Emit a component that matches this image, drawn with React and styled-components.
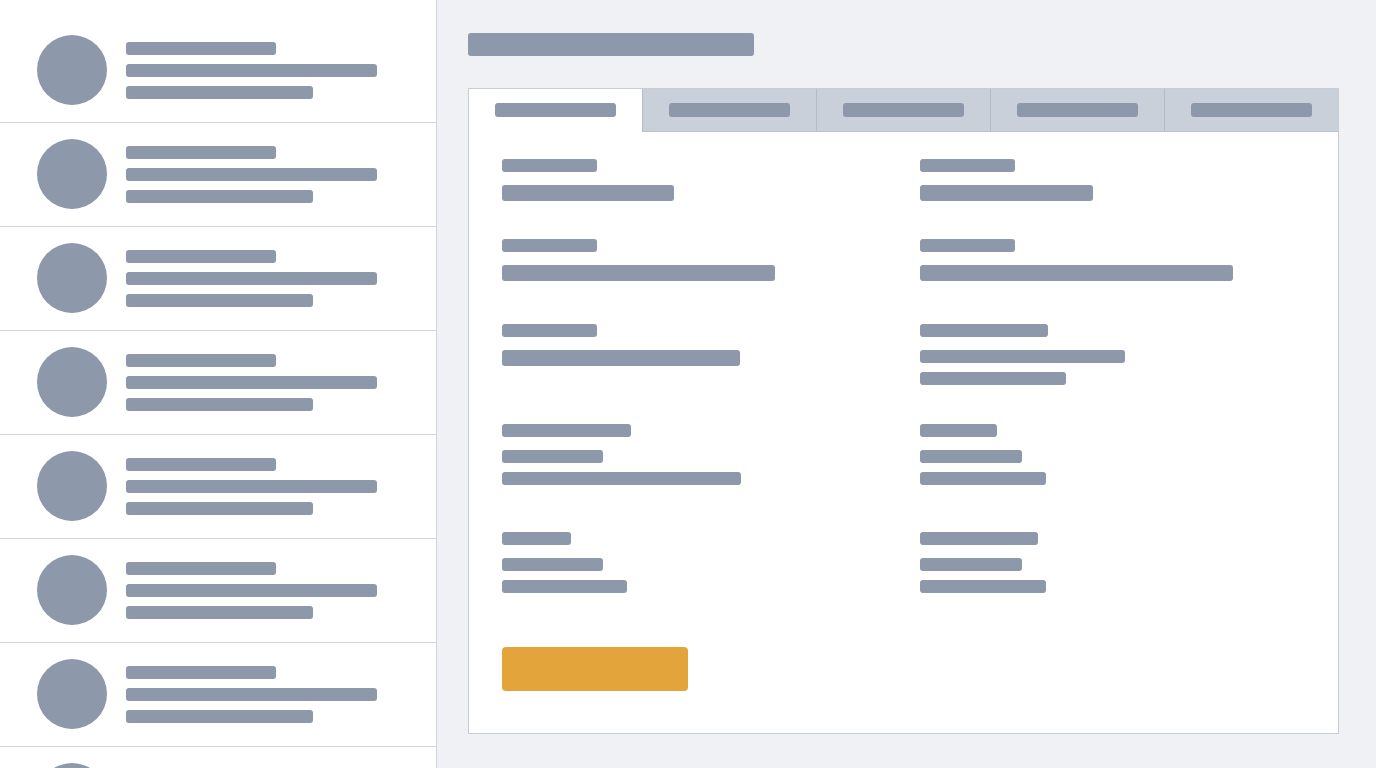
import React from "react";
import styled, { createGlobalStyle } from "styled-components";

const GlobalStyle = createGlobalStyle`
  html, body {
    margin: 0;
    padding: 0;
    height: 100%;
    background: #f0f1f4;
    font-family: "Liberation Sans", Arial, sans-serif;
  }
  #root { height: 100%; }
  * { box-sizing: border-box; }
`;

const BONE = "#8d98aa";

const Layout = styled.div`
  display: flex;
  height: 768px;
  overflow: hidden;
`;

const Sidebar = styled.aside`
  flex: 0 0 437px;
  height: 100%;
  overflow: hidden;
  background: #ffffff;
  border-right: 1px solid #cdd4de;
  padding-top: 19px;
`;

const ContactRow = styled.div`
  display: flex;
  align-items: center;
  gap: 19px;
  height: 104px;
  padding: 0 0 1px 37px;
  border-bottom: 1px solid #cfd6e0;
`;

const Avatar = styled.div`
  flex: 0 0 70px;
  width: 70px;
  height: 70px;
  border-radius: 50%;
  background: ${BONE};
`;

const Lines = styled.div`
  display: flex;
  flex-direction: column;
  gap: 9px;
`;

const Bone = styled.div`
  width: ${(p) => p.$w}px;
  height: ${(p) => p.$h || 13}px;
  border-radius: 3px;
  background: ${BONE};
`;

const Main = styled.main`
  flex: 1;
  padding: 33px 37px 0 31px;
`;

const Title = styled(Bone)`
  margin-bottom: 32px;
`;

const Card = styled.section`
  width: 871px;
  background: #ffffff;
  border: 1px solid #c6cdd7;
`;

const TabBar = styled.div`
  display: flex;
`;

const Tab = styled.div`
  flex: 1 1 0;
  height: 43px;
  display: flex;
  align-items: center;
  justify-content: center;
  background: ${(p) => (p.$active ? "#ffffff" : "#c9d0da")};
  border-bottom: 1px solid ${(p) => (p.$active ? "transparent" : "#b9c2ce")};
  & + & {
    border-left: 1px solid #b3bcc8;
  }
`;

const Body = styled.div`
  padding: 27px 33px 42px 33px;
`;

const FieldRow = styled.div`
  display: grid;
  grid-template-columns: 384px 384px;
  column-gap: 34px;
  margin-bottom: ${(p) => p.$after}px;
`;

const Field = styled.div`
  display: flex;
  flex-direction: column;
  align-items: flex-start;
`;

const FieldLabel = styled(Bone)`
  margin-bottom: 13px;
`;

const Values = styled.div`
  display: flex;
  flex-direction: column;
  gap: 9px;
`;

const SaveButton = styled.button`
  display: block;
  width: 186px;
  height: 44px;
  border: none;
  border-radius: 4px;
  background: #e4a43c;
  padding: 0;
  cursor: pointer;
`;

const contacts = Array.from({ length: 8 }, (_, i) => i);

const tabs = [0, 1, 2, 3, 4];

const rows = [
  {
    after: 38,
    fields: [
      { label: 95, values: [{ w: 172, h: 16 }] },
      { label: 95, values: [{ w: 173, h: 16 }] },
    ],
  },
  {
    after: 43,
    fields: [
      { label: 95, values: [{ w: 273, h: 16 }] },
      { label: 95, values: [{ w: 313, h: 16 }] },
    ],
  },
  {
    after: 39,
    fields: [
      { label: 95, values: [{ w: 238, h: 16 }] },
      { label: 128, values: [{ w: 205 }, { w: 146 }] },
    ],
  },
  {
    after: 47,
    fields: [
      { label: 129, values: [{ w: 101 }, { w: 239 }] },
      { label: 77, values: [{ w: 102 }, { w: 126 }] },
    ],
  },
  {
    after: 54,
    fields: [
      { label: 69, values: [{ w: 101 }, { w: 125 }] },
      { label: 118, values: [{ w: 102 }, { w: 126 }] },
    ],
  },
];

export default function App() {
  return (
    <>
      <GlobalStyle />
      <Layout>
        <Sidebar>
          {contacts.map((i) => (
            <ContactRow key={i}>
              <Avatar />
              <Lines>
                <Bone $w={150} />
                <Bone $w={251} />
                <Bone $w={187} />
              </Lines>
            </ContactRow>
          ))}
        </Sidebar>
        <Main>
          <Title $w={286} $h={23} />
          <Card>
            <TabBar>
              {tabs.map((t) => (
                <Tab key={t} $active={t === 0}>
                  <Bone $w={121} $h={14} />
                </Tab>
              ))}
            </TabBar>
            <Body>
              {rows.map((row, r) => (
                <FieldRow key={r} $after={row.after}>
                  {row.fields.map((f, c) => (
                    <Field key={c}>
                      <FieldLabel $w={f.label} />
                      <Values>
                        {f.values.map((v, k) => (
                          <Bone key={k} $w={v.w} $h={v.h} />
                        ))}
                      </Values>
                    </Field>
                  ))}
                </FieldRow>
              ))}
              <SaveButton type="button" aria-label="Save" />
            </Body>
          </Card>
        </Main>
      </Layout>
    </>
  );
}
